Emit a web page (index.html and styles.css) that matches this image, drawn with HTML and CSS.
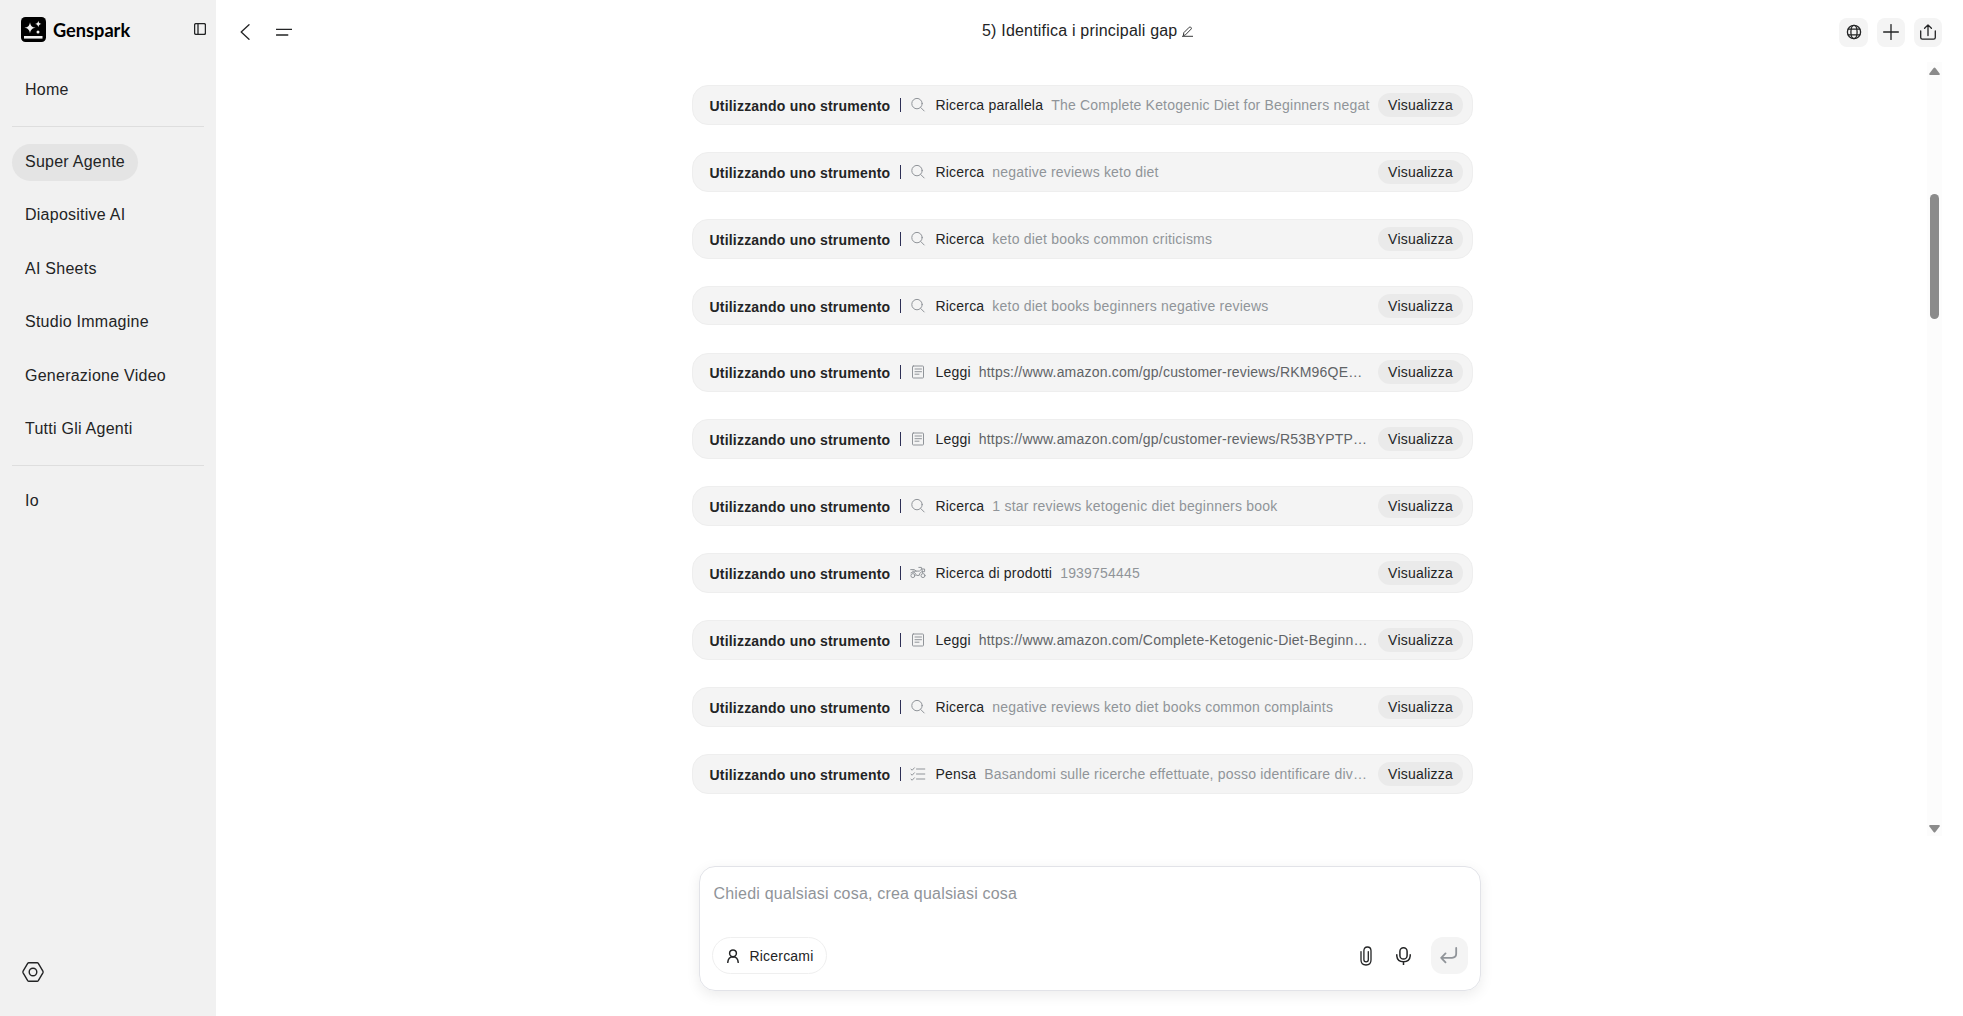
FILE: index.html
```html
<!DOCTYPE html>
<html lang="it">
<head>
<meta charset="utf-8">
<title>Genspark</title>
<link rel="stylesheet" href="styles.css">
</head>
<body>
<svg class="sprite" width="0" height="0">
  <symbol id="search" viewBox="0 0 16 16"><circle cx="7" cy="6.6" r="5.2"/><path d="M10.8 10.6 14.2 14"/></symbol>
  <symbol id="doc" viewBox="0 0 16 16"><rect x="2.5" y="2" width="11" height="12" rx=".8"/><path d="M5 5h6.5M5 7.7h6.5M5 10.2h4"/></symbol>
  <symbol id="bike" viewBox="0 0 16 16"><circle cx="2.9" cy="10.6" r="2"/><circle cx="13" cy="10.6" r="2"/><path d="M.7 4.6h3.5l2 1.5h3.2l2.4-2.2M8.8 2.4h2.6l1.2 5.2M1 7.8c2-1.2 4-.6 4.6 1l1 1.6h2.6c.3-2.4 1.6-3.8 3.6-3.7h1.8V4h-2.2M2.7 6.2h3.5"/></symbol>
  <symbol id="list" viewBox="0 0 16 16"><path d="M6.5 3h8.3M6.5 8h8.3M6.5 13h8.3M1 3.2l1.2 1 2.2-2.4M1 8.2l1.2 1 2.2-2.4M1 13.2l1.2 1 2.2-2.4"/></symbol>
</svg>
<div class="app">
  <aside class="sidebar">
    <div class="brand">
      <svg class="logo" viewBox="0 0 25 25"><rect width="25" height="25" rx="4.5"/><path class="w" d="M9 5.2c.6 3.6 2 5 5.6 5.6-3.600.6-5 2-5.600 5.600-.6-3.600-2-5-5.600-5.600 3.600-.6 5-2 5.600-5.600zM17.300 3.800c.3 2 1.200 2.900 3.200 3.200-2 .3-2.900 1.200-3.200 3.200-.3-2-1.200-2.900-3.200-3.200 2-.3 2.900-1.200 3.200-3.200z"/><circle class="w" cx="17" cy="15" r="1.500"/><path class="w" d="M3 19h18.500v2.600H3z"/></svg>
      <span class="name">Genspark</span>
      <svg class="collapse" viewBox="0 0 12 12"><rect x=".6" y=".6" width="10.800" height="10.800" rx="1.300"/><path d="M4 .6v10.800"/></svg>
    </div>
    <nav class="nav">
      <a class="item">Home</a>
      <hr>
      <a class="item active">Super Agente</a>
      <a class="item">Diapositive AI</a>
      <a class="item">AI Sheets</a>
      <a class="item">Studio Immagine</a>
      <a class="item">Generazione Video</a>
      <a class="item">Tutti Gli Agenti</a>
      <hr>
      <a class="item">Io</a>
    </nav>
    <svg class="settings" viewBox="0 0 22 20"><path d="M6.800 .8h8.400q.7 0 1.100.6l4.600 7.800q.4.8 0 1.600l-4.600 7.800q-.4.600-1.100.600H6.800q-.7 0-1.100-.6L1.100 10.800q-.4-.8 0-1.600l4.600-7.800q.4-.6 1.100-.6z"/><circle cx="11" cy="10" r="3.800"/></svg>
  </aside>
  <main class="main">
    <header class="header">
      <div class="left">
        <svg class="back" viewBox="0 0 10 16"><path d="M9 .7 1.200 8 9 15.300"/></svg>
        <svg class="menu" viewBox="0 0 16 8"><path d="M.5 1.300h15.300M.5 7h11.300"/></svg>
      </div>
      <div class="title"><span>5) Identifica i principali gap</span><svg class="edit" viewBox="0 0 11 11"><path d="M1.400 9.200 1.800 6.700 7.300 1.200q.7-.6 1.400 0l.5.500q.5.700 0 1.300L3.700 8.600zM.2 10.300h10.600"/></svg></div>
      <div class="actions">
        <span class="btn wide"><svg viewBox="0 0 16 16"><circle cx="8" cy="8" r="6.600"/><ellipse cx="8" cy="8" rx="3.100" ry="6.600"/><path d="M2.200 5.200h11.600M2.200 10.800h11.600"/></svg></span>
        <span class="btn"><svg viewBox="0 0 16 16"><path d="M8 .6v14.800M.6 8h14.800"/></svg></span>
        <span class="btn"><svg viewBox="0 0 16 16"><path d="M.7 7v6.500q0 1.700 1.700 1.700h11.200q1.700 0 1.700-1.700V7M8 11.500V1M4.600 4.300 8 .9l3.400 3.400"/></svg></span>
      </div>
    </header>
    <div class="body">
      <section class="steps">
        <div class="row"><b>Utilizzando uno strumento</b><i class="bar"></i><svg class="ico"><use href="#search"/></svg><span class="tool">Ricerca parallela</span><span class="detail cut">The Complete Ketogenic Diet for Beginners negat</span><span class="view">Visualizza</span></div>
        <div class="row"><b>Utilizzando uno strumento</b><i class="bar"></i><svg class="ico"><use href="#search"/></svg><span class="tool">Ricerca</span><span class="detail">negative reviews keto diet</span><span class="view">Visualizza</span></div>
        <div class="row"><b>Utilizzando uno strumento</b><i class="bar"></i><svg class="ico"><use href="#search"/></svg><span class="tool">Ricerca</span><span class="detail">keto diet books common criticisms</span><span class="view">Visualizza</span></div>
        <div class="row"><b>Utilizzando uno strumento</b><i class="bar"></i><svg class="ico"><use href="#search"/></svg><span class="tool">Ricerca</span><span class="detail">keto diet books beginners negative reviews</span><span class="view">Visualizza</span></div>
        <div class="row"><b>Utilizzando uno strumento</b><i class="bar"></i><svg class="ico"><use href="#doc"/></svg><span class="tool">Leggi</span><span class="detail url">https://www.amazon.com/gp/customer-reviews/RKM96QE…</span><span class="view">Visualizza</span></div>
        <div class="row"><b>Utilizzando uno strumento</b><i class="bar"></i><svg class="ico"><use href="#doc"/></svg><span class="tool">Leggi</span><span class="detail url">https://www.amazon.com/gp/customer-reviews/R53BYPTP…</span><span class="view">Visualizza</span></div>
        <div class="row"><b>Utilizzando uno strumento</b><i class="bar"></i><svg class="ico"><use href="#search"/></svg><span class="tool">Ricerca</span><span class="detail">1 star reviews ketogenic diet beginners book</span><span class="view">Visualizza</span></div>
        <div class="row"><b>Utilizzando uno strumento</b><i class="bar"></i><svg class="ico"><use href="#bike"/></svg><span class="tool">Ricerca di prodotti</span><span class="detail">1939754445</span><span class="view">Visualizza</span></div>
        <div class="row"><b>Utilizzando uno strumento</b><i class="bar"></i><svg class="ico"><use href="#doc"/></svg><span class="tool">Leggi</span><span class="detail url">https://www.amazon.com/Complete-Ketogenic-Diet-Beginn…</span><span class="view">Visualizza</span></div>
        <div class="row"><b>Utilizzando uno strumento</b><i class="bar"></i><svg class="ico"><use href="#search"/></svg><span class="tool">Ricerca</span><span class="detail">negative reviews keto diet books common complaints</span><span class="view">Visualizza</span></div>
        <div class="row"><b>Utilizzando uno strumento</b><i class="bar"></i><svg class="ico"><use href="#list"/></svg><span class="tool">Pensa</span><span class="detail">Basandomi sulle ricerche effettuate, posso identificare div…</span><span class="view">Visualizza</span></div>
      </section>
      <div class="scrollbar">
        <svg class="arrow" viewBox="0 0 11 8"><path d="M4.600 .9q.9-1 1.800 0l4.200 5.500q.6 1.300-.6 1.500H1q-1.200-.2-.6-1.500z"/></svg>
        <div class="thumb"></div>
        <svg class="arrow down" viewBox="0 0 11 8"><path d="M4.600 7.100q.9 1 1.800 0l4.200-5.500Q11.200.3 10 .1H1Q-.2.3.4 1.600z"/></svg>
      </div>
    </div>
    <div class="composer">
      <div class="placeholder">Chiedi qualsiasi cosa, crea qualsiasi cosa</div>
      <div class="tools">
        <span class="chip"><svg viewBox="0 0 12 14"><circle cx="6" cy="4.300" r="3.400"/><path d="M.8 13.400c.2-3.300 2-5.600 5.200-5.700 3.200.1 5 2.400 5.200 5.700"/></svg>Ricercami</span>
        <svg class="clip" viewBox="0 0 12 20"><path d="M8.300 5.600v8.200q0 2-2.200 2t-2.200-2V4.800Q3.900 1 7.400 1T11 4.800v9.200q0 5-5 5t-5-5V5.600"/></svg>
        <svg class="mic" viewBox="0 0 15 18"><rect x="3.900" y=".8" width="7.200" height="11.200" rx="3.600"/><path d="M.8 7.800v1.200q.5 5.800 6.700 5.800t6.700-5.800V7.800M7.500 14.800v3"/></svg>
        <span class="send"><svg viewBox="0 0 18 17"><path d="M16.200 1v5.600q0 4.200-4.200 4.200H1.400M5.500 6.400 1.200 10.800l4.300 4.500"/></svg></span>
      </div>
    </div>
  </main>
</div>
</body>
</html>
```

FILE: styles.css
```css
* { box-sizing: border-box; }
body {
  margin: 0;
  font-family: "Liberation Sans", Arial, sans-serif;
  font-size: 16px;
  letter-spacing: .2px;
  color: #232425;
  background: #fff;
}
svg { fill: none; stroke: #232425; stroke-width: 1.3; stroke-linecap: round; stroke-linejoin: round; flex: none; display: block; }
.sprite { display: none; }
.app { display: flex; height: 1016px; overflow: hidden; }

.sidebar { width: 216px; background: #f1f1f1; display: flex; flex-direction: column; padding: 17px 12px 34px; flex: none; }
.brand { display: flex; height: 25px; margin: 0 -2px 0 9px; }
.logo { width: 25px; height: 25px; fill: #000; stroke: none; }
.logo .w { fill: #f1f1f1; }
.name { font: 700 18.200px/27px Lato, sans-serif; letter-spacing: 0; color: #000; margin-left: 7px; }
.collapse { width: 12px; height: 12px; margin: 6px 0 0 auto; }
.nav { display: flex; flex-direction: column; align-items: flex-start; gap: 16px; margin-top: 30px; letter-spacing: .25px; }
.nav hr { width: 192px; height: 1px; margin: .5px 0; border: 0; background: #dedede; }
.item { height: 37.500px; line-height: 36px; padding: 0 13px; border-radius: 19px; white-space: nowrap; }
.active { background: #e4e4e4; }
.settings { width: 22px; height: 20px; margin: auto 0 0 10px; stroke-width: 1.400; }

.main { flex: 1; display: flex; flex-direction: column; min-width: 0; }
.header { height: 62px; flex: none; display: grid; grid-template-columns: 742px 1fr auto; padding: 18px 21px 0 24px; }
.left { display: flex; gap: 26px; }
.back { width: 10px; height: 16px; margin-top: 6px; }
.menu { width: 16px; height: 8px; margin-top: 10px; }
.title { display: flex; line-height: 26px; }
.edit { width: 11px; height: 11px; margin: 8px 0 0 5px; stroke-width: .9; }
.actions { display: flex; gap: 9px; }
.btn { width: 28px; height: 29px; border-radius: 8px; background: #f4f4f4; display: flex; align-items: center; justify-content: center; padding-bottom: 1px; }
.btn.wide { width: 29px; }
.btn svg { width: 16px; height: 16px; }

.body { height: 774px; flex: none; display: flex; justify-content: space-between; padding: 0 21px 0 476px; }
.steps { width: 781px; padding-top: 23px; display: flex; flex-direction: column; gap: 27.100px; }
.row { height: 39.800px; flex: none; border: 1px solid #eee; border-radius: 16px; background: #f4f4f4; display: flex; align-items: center; padding: 0 9px 0 16.500px; font-size: 14px; white-space: nowrap; }
.row b { position: relative; top: 1px; width: 183px; }
.bar { width: 1px; height: 14px; background: #2d2f55; margin: 0 9px 0 7.500px; }
.ico { width: 16px; height: 16px; stroke: #909499; stroke-width: 1; margin-right: 9.500px; }
.detail { flex: 1; min-width: 0; margin: 0 7.500px 0 8px; overflow: hidden; color: #909499; }
.url { color: #606366; }
.cut { overflow: visible; }
.view { width: 85px; height: 24px; line-height: 24px; border-radius: 12px; background: #eaeaea; text-align: center; flex: none; }

.scrollbar { width: 15px; background: #fcfcfc; display: flex; flex-direction: column; align-items: center; padding: 5px 0 3px; }
.arrow { width: 11px; height: 8px; fill: #8b8b8b; stroke: none; }
.thumb { width: 9px; height: 125px; margin-top: 119px; border-radius: 5px; background: #8b8b8b; }
.down { margin-top: auto; }

.composer { width: 782px; height: 125px; margin: 30px 0 0 482.500px; border: 1px solid #e2e3e8; border-radius: 16px; padding: 17px 12px 16px; box-shadow: 0 4px 14px rgba(0,0,0,.08); display: flex; flex-direction: column; justify-content: space-between; }
.placeholder { padding-left: 2px; line-height: 20px; color: #909499; }
.tools { display: flex; align-items: center; height: 37px; }
.chip { width: 115px; height: 37px; border: 1px solid #efefef; border-radius: 19px; display: flex; align-items: center; padding-left: 14px; gap: 11px; font-size: 14px; margin-right: auto; }
.chip svg { width: 12px; height: 14px; stroke-width: 1.500; }
.clip { width: 12px; height: 20px; margin-right: 24px; }
.mic { width: 15px; height: 18px; margin-right: 20px; stroke-width: 1.500; }
.send { width: 37px; height: 37px; border-radius: 12px; background: #f4f4f4; display: flex; align-items: center; justify-content: center; }
.send svg { width: 18px; height: 17px; stroke: #909499; stroke-width: 1.800; }
```
